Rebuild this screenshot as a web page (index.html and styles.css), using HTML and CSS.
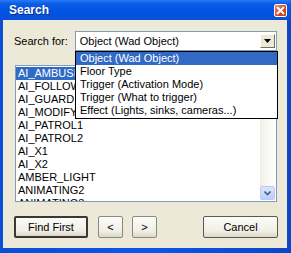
FILE: index.html
```html
<!DOCTYPE html>
<html lang="en">
  <head>
    <meta charset="UTF-8" />
    <title>Search</title>
    <link rel="stylesheet" href="styles.css">
  </head>
  <body>
    <div class="window">
      <div class="titlebar">
        <span class="title">Search</span>
        <span class="close">
          <svg width="9" height="9" viewBox="0 0 9 9">
            <path d="M1 1 L8 8 M8 1 L1 8" stroke="#fff" stroke-width="2" />
          </svg>
        </span>
      </div>

      <div class="dialog">
        <div class="search-row">
          <label class="label">Search for:</label>
          <div class="combo">
            <span class="combo-text">Object (Wad Object)</span>
            <span class="combo-btn">
              <svg width="7" height="4" viewBox="0 0 7 4"><path d="M0 0 H7 L3.5 4 Z" fill="#000" /></svg>
            </span>
          </div>
          <ul class="dropdown">
            <li class="selected">Object (Wad Object)</li>
            <li>Floor Type</li>
            <li>Trigger (Activation Mode)</li>
            <li>Trigger (What to trigger)</li>
            <li>Effect (Lights, sinks, cameras...)</li>
          </ul>
        </div>

        <div class="listbox">
          <ul class="items">
            <li class="selected">AI_AMBUSH</li>
            <li>AI_FOLLOW</li>
            <li>AI_GUARD</li>
            <li>AI_MODIFY</li>
            <li>AI_PATROL1</li>
            <li>AI_PATROL2</li>
            <li>AI_X1</li>
            <li>AI_X2</li>
            <li>AMBER_LIGHT</li>
            <li>ANIMATING2</li>
            <li>ANIMATING3</li>
          </ul>
          <div class="scrollbar">
            <div class="track"></div>
            <div class="arrow">
              <svg width="7" height="5" viewBox="0 0 7 5"><path d="M0.5 0.5 L3.5 3.5 L6.5 0.5" stroke="#4d6185" stroke-width="1.6" fill="none" /></svg>
            </div>
          </div>
        </div>

        <div class="buttons">
          <button class="btn default">Find First</button>
          <button class="btn small">&lt;</button>
          <button class="btn small">&gt;</button>
          <button class="btn cancel">Cancel</button>
        </div>
      </div>
    </div>
  </body>
</html>
```

FILE: styles.css
```css
body {
  margin: 0;
  font-family: "Liberation Sans", Arial, sans-serif;
  font-size: 11px;
  color: #000;
}
.window {
  width: 291px;
  height: 253px;
  box-sizing: border-box;
  background: linear-gradient(to right, #0a4fd6, #0858ea 50%, #0a47c8);
  padding: 0 4px 5px 3px;
  display: flex;
  flex-direction: column;
}
.titlebar {
  height: 20px;
  margin: 0 -4px 0 -3px;
  padding: 0 4px 0 9px;
  display: flex;
  align-items: center;
  justify-content: space-between;
  background: linear-gradient(to bottom, #2a7af5, #0a5be6 20%, #0054e3 60%, #0a4fd8);
}
.title {
  font-weight: bold;
  font-size: 12px;
  color: #fff;
  text-shadow: 1px 1px 0 #0a2a8a;
}
.close {
  width: 13px;
  height: 13px;
  box-sizing: border-box;
  border: 1px solid #fff;
  border-radius: 2px;
  background: linear-gradient(135deg, #f08a6a, #d8461e 60%, #c23c10);
  display: flex;
  align-items: center;
  justify-content: center;
}
.dialog {
  flex: 1;
  background: #ece9d8;
  padding: 11px 10px 0 11px;
}
.search-row {
  display: flex;
  align-items: center;
  position: relative;
}
.label {
  width: 61px;
}
.combo {
  width: 203px;
  height: 20px;
  box-sizing: border-box;
  border: 1px solid #7f9db9;
  background: #fff;
  display: flex;
  align-items: center;
  justify-content: space-between;
  padding: 0 1px 0 4px;
}
.combo-btn {
  width: 15px;
  height: 14px;
  box-sizing: border-box;
  background: #ece9d8;
  border: 1px solid;
  border-color: #fff #716f64 #716f64 #fff;
  display: flex;
  align-items: center;
  justify-content: center;
}
.dropdown {
  position: absolute;
  left: 61px;
  top: 20px;
  width: 203px;
  box-sizing: border-box;
  margin: 0;
  padding: 0 0 1px;
  list-style: none;
  background: #fff;
  border: 1px solid #000;
  z-index: 2;
}
.dropdown li {
  height: 13px;
  line-height: 13px;
  padding-left: 4px;
}
.selected {
  background: #316ac5;
  color: #fff;
}
.listbox {
  margin: 14px 0 0 1px;
  height: 137px;
  box-sizing: border-box;
  border: 1px solid #7f9db9;
  background: #fff;
  display: flex;
  overflow: hidden;
}
.items {
  flex: 1;
  margin: 0;
  padding: 1px 0 0 0;
  list-style: none;
}
.items li {
  height: 13px;
  line-height: 13px;
  padding-left: 2px;
}
.scrollbar {
  width: 16px;
  display: flex;
  flex-direction: column;
}
.track {
  flex: 1;
  background: linear-gradient(to right, #eeede5, #f8f7f2 40%, #fefefe);
}
.arrow {
  height: 14px;
  margin: 0 1px 1px 0;
  box-sizing: border-box;
  border: 1px solid #b7caf5;
  border-radius: 2px;
  background: linear-gradient(to bottom, #dbe5fd, #bacefa);
  display: flex;
  align-items: center;
  justify-content: center;
}
.buttons {
  display: flex;
  margin-top: 14px;
}
.btn {
  height: 22px;
  font: inherit;
  color: #000;
  box-sizing: border-box;
  border: 1px solid #5c5a52;
  border-radius: 2px;
  background: linear-gradient(to bottom, #fbfbf8, #f1efe6 70%, #dcd8c8);
  padding: 0;
}
.default {
  width: 74px;
  border: 2px solid #3a3830;
}
.small {
  width: 25px;
  margin-left: 10px;
  border-color: #8a8880;
}
.small + .small {
  margin-left: 9px;
}
.cancel {
  width: 75px;
  margin-left: auto;
  margin-right: -1px;
}
```
